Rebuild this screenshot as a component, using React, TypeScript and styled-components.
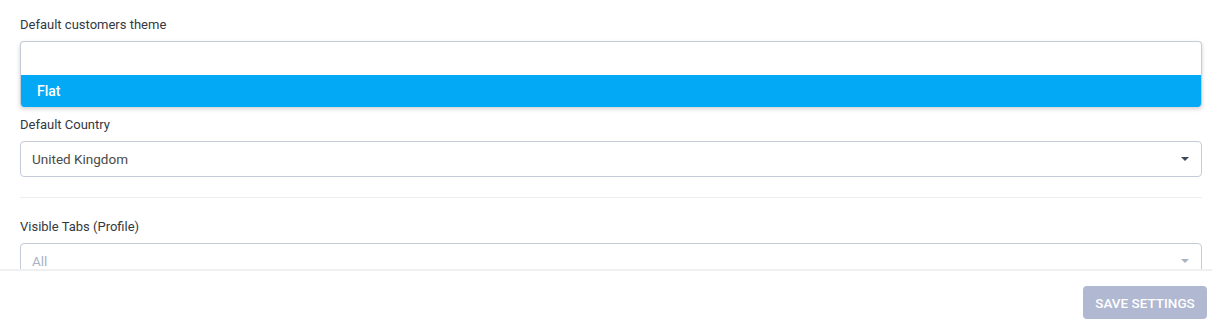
import React from "react";
import styled, { createGlobalStyle } from "styled-components";

const GlobalStyle = createGlobalStyle`
  *, *::before, *::after {
    box-sizing: border-box;
  }
  html, body {
    margin: 0;
    padding: 0;
    background: #ffffff;
    font-family: Roboto, "Liberation Sans", sans-serif;
  }
`;

const Page = styled.div`
  width: 1212px;
  height: 329px;
  display: flex;
  flex-direction: column;
  overflow: hidden;
  background: #ffffff;
`;

const Content = styled.div`
  height: 269px;
  flex-shrink: 0;
  overflow: hidden;
  padding: 16px 10px 0 20px;
`;

const Field = styled.div<{ $gap?: number }>`
  display: flex;
  flex-direction: column;
  margin-top: ${(p) => p.$gap ?? 0}px;
`;

const Label = styled.label`
  font-size: 13px;
  color: #333842;
  line-height: 17px;
  margin-bottom: 8px;
`;

const Combo = styled.div`
  border: 1px solid #c5ccd8;
  border-bottom: 0;
  border-radius: 4px;
  background: #fff;
  box-shadow: 0 2px 4px rgba(0, 0, 0, 0.18);
  overflow: hidden;
`;

const SearchInput = styled.div`
  height: 33px;
`;

const Option = styled.div<{ $active?: boolean }>`
  height: 32px;
  display: flex;
  align-items: center;
  padding-left: 16px;
  font-size: 14px;
  font-weight: 500;
  color: ${(p) => (p.$active ? "#fff" : "#444")};
  background: ${(p) => (p.$active ? "#03a9f4" : "#fff")};
`;

const Select = styled.div<{ $placeholder?: boolean }>`
  height: 36px;
  border: 1px solid #c5ccd8;
  border-radius: 4px;
  display: flex;
  align-items: center;
  justify-content: space-between;
  padding: 0 12px 0 11px;
  font-size: 13.5px;
  color: ${(p) => (p.$placeholder ? "#aab2c3" : "#4a4a4a")};
`;

const Caret = styled.span<{ $muted?: boolean }>`
  width: 0;
  height: 0;
  border-left: 4px solid transparent;
  border-right: 4px solid transparent;
  border-top: 4px solid ${(p) => (p.$muted ? "#aab2c3" : "#3d4a5c")};
`;

const Divider = styled.hr`
  border: 0;
  border-top: 1px solid #eceef1;
  margin: 20px 0 20px;
`;

const Footer = styled.div`
  flex: 1;
  border-top: 2px solid #eff0f2;
  display: flex;
  justify-content: flex-end;
  align-items: flex-start;
  padding: 15px 5px 0 0;
`;

const SaveButton = styled.button`
  width: 124px;
  height: 33px;
  border: 0;
  border-radius: 4px;
  background: #b0b8d2;
  color: #ffffff;
  font-family: Roboto, "Liberation Sans", sans-serif;
  font-size: 13.5px;
  font-weight: 500;
  text-transform: uppercase;
  padding: 0;
  cursor: default;
`;

export default function App() {
  return (
    <Page>
      <GlobalStyle />
      <Content>
        <Field>
          <Label>Default customers theme</Label>
          <Combo>
            <SearchInput />
            <Option $active>Flat</Option>
          </Combo>
        </Field>
        <Field $gap={9}>
          <Label>Default Country</Label>
          <Select>
            United Kingdom
            <Caret />
          </Select>
        </Field>
        <Divider />
        <Field>
          <Label>Visible Tabs (Profile)</Label>
          <Select $placeholder>
            All
            <Caret $muted />
          </Select>
        </Field>
      </Content>
      <Footer>
        <SaveButton>Save Settings</SaveButton>
      </Footer>
    </Page>
  );
}
